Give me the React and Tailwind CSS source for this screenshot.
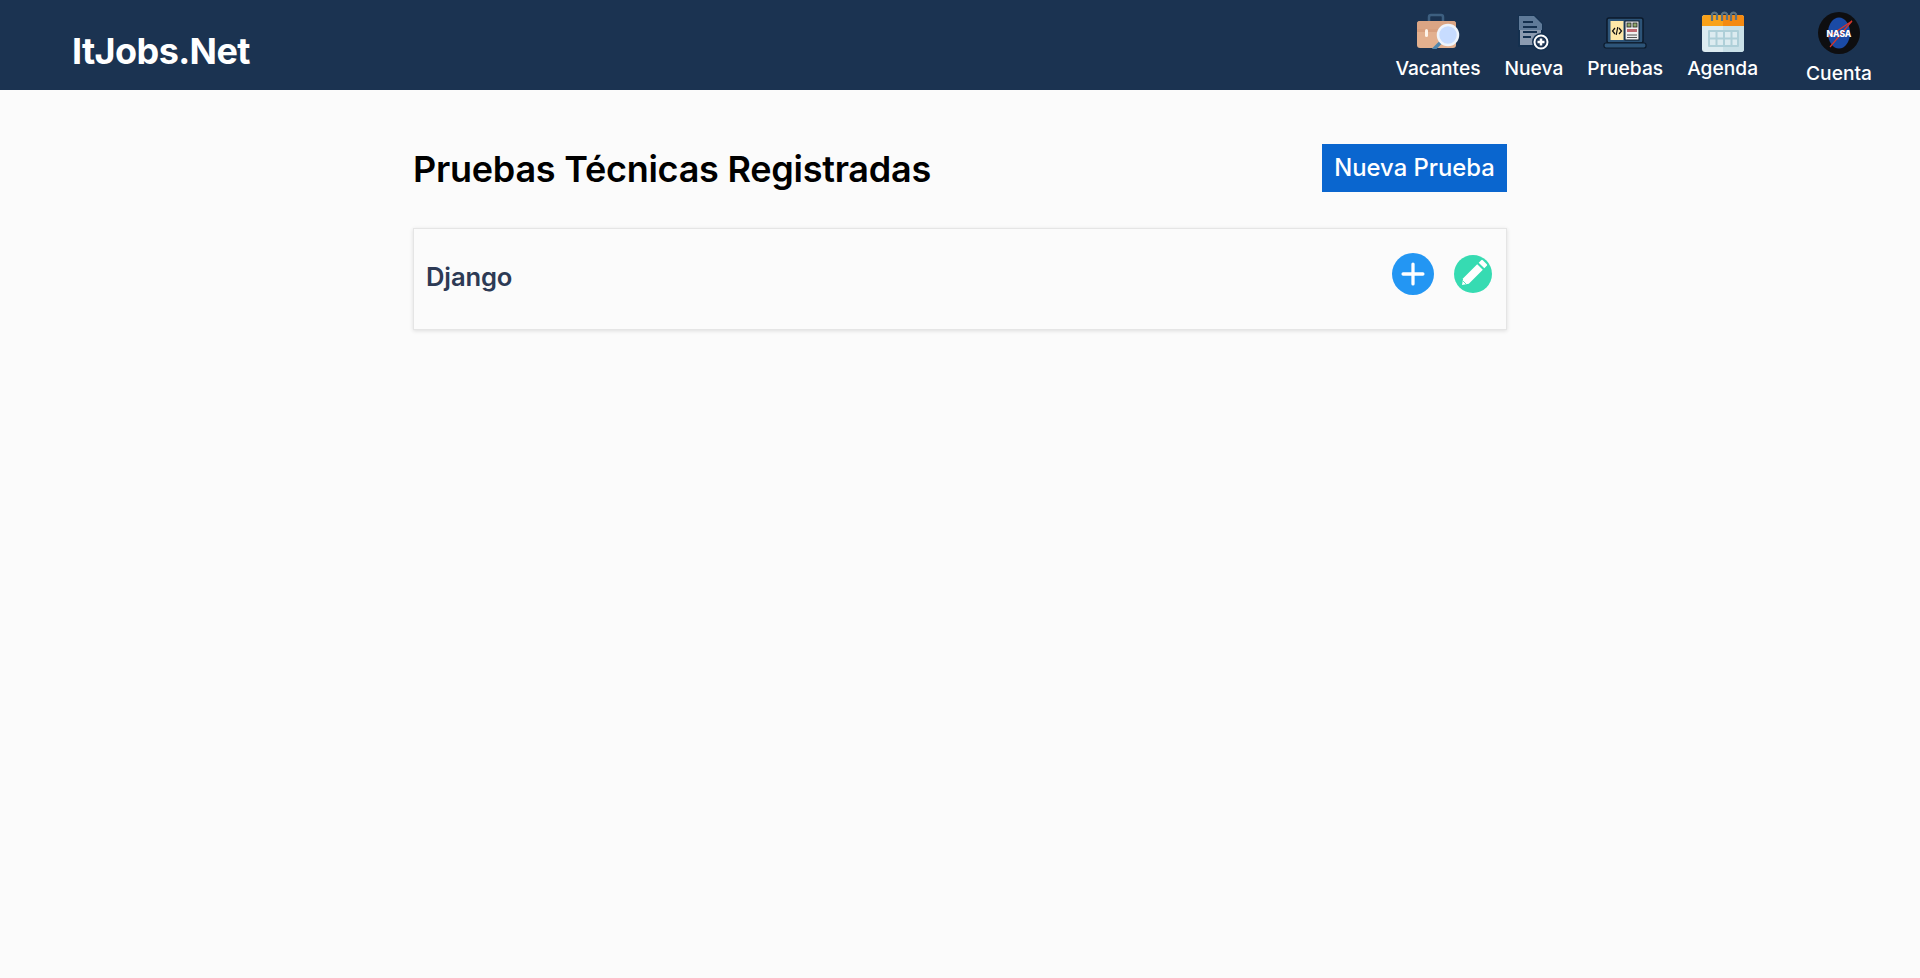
import { Plus } from "lucide-react"

function BriefcaseIcon() {
  return (
    <svg width="44" height="36" viewBox="0 0 44 36" className="block">
      <path d="M13 9V4a2 2 0 0 1 2-2h10a2 2 0 0 1 2 2v5" fill="none" stroke="#3d5f80" strokeWidth="2.5" />
      <rect x="1" y="8" width="39" height="27" rx="3" fill="#e3b08e" />
      <rect x="1" y="8" width="39" height="11" rx="3" fill="#dba584" />
      <rect x="1" y="16" width="39" height="3" fill="#d89f7d" />
      <rect x="9" y="16" width="3" height="8" rx="1.5" fill="#fdf3e8" />
      <path d="M25 29l-7 7" stroke="#4f86ad" strokeWidth="3.5" strokeLinecap="round" />
      <circle cx="32" cy="22" r="10" fill="#c7dcff" stroke="#eef4fb" strokeWidth="2.5" />
    </svg>
  )
}

function NewDocIcon() {
  return (
    <svg width="34" height="36" viewBox="0 0 34 36" className="block mt-1">
      <path d="M2 1h15l8 8v22H2z" fill="#8c9bb0" stroke="#14304f" strokeWidth="2" />
      <path d="M2 1h15l8 8v6H2z" fill="#5f7a98" />
      <path d="M6 7h10M6 12h14M6 17h14M6 22h8" stroke="#14304f" strokeWidth="2" />
      <circle cx="24" cy="27" r="9" fill="#14304f" />
      <circle cx="24" cy="27" r="6.5" fill="#1b3351" stroke="#ffffff" strokeWidth="2" />
      <path d="M20.5 27h7M24 23.5v7" stroke="#ffffff" strokeWidth="2.5" />
    </svg>
  )
}

function LaptopIcon() {
  return (
    <svg width="44" height="32" viewBox="0 0 44 32" className="block mt-1">
      <rect x="4" y="1" width="36" height="25" rx="2" fill="#2d5478" stroke="#0c1a2b" strokeWidth="1.5" />
      <rect x="7.5" y="4" width="13" height="19" fill="#ffe9a8" />
      <rect x="22" y="4" width="14" height="19" fill="#f0f0f0" stroke="#0c1a2b" />
      <rect x="24" y="6" width="4" height="4" fill="#8fa86a" stroke="#222" strokeWidth=".8" />
      <rect x="30" y="6" width="4" height="4" fill="#8fa86a" stroke="#222" strokeWidth=".8" />
      <rect x="24" y="12" width="10" height="3" fill="#c06a72" />
      <path d="M24 18h10M24 20.5h10" stroke="#555" />
      <path d="M12 11l-2.5 3 2.5 3M16 11l2.5 3-2.5 3M14.8 10l-1.6 8" fill="none" stroke="#111" strokeWidth="1.2" />
      <rect x="1" y="26" width="42" height="5" rx="2" fill="#2d5478" stroke="#0c1a2b" strokeWidth="1.2" />
    </svg>
  )
}

function CalendarIcon() {
  return (
    <svg width="44" height="42" viewBox="0 0 44 42" className="block">
      <path d="M1 8a3 3 0 0 1 3-3h36a3 3 0 0 1 3 3v31a3 3 0 0 1-3 3H4a3 3 0 0 1-3-3z" fill="#dcebf0" />
      <path d="M22 15h21v24a3 3 0 0 1-3 3H22z" fill="#c9e0e7" />
      <path d="M1 8a3 3 0 0 1 3-3h36a3 3 0 0 1 3 3v8H1z" fill="#f9a21a" />
      <path d="M22 5h18a3 3 0 0 1 3 3v8H22z" fill="#f48a12" />
      <path d="M11 11V4a3 3 0 0 1 5 0v6M21 11V4a3 3 0 0 1 5 0v6M30 11V4a3 3 0 0 1 5 0v6" fill="none" stroke="#5d7380" strokeWidth="2.2" />
      <rect x="7" y="20" width="31" height="17" rx="1" fill="#aecfd8" />
      <g fill="#dcebf0">
        <rect x="9" y="22" width="5.5" height="5.5" />
        <rect x="16.5" y="22" width="5.5" height="5.5" />
        <rect x="24" y="22" width="5.5" height="5.5" />
        <rect x="31.5" y="22" width="4.5" height="5.5" />
        <rect x="9" y="29.5" width="5.5" height="5.5" />
        <rect x="16.5" y="29.5" width="5.5" height="5.5" />
        <rect x="24" y="29.5" width="5.5" height="5.5" />
        <rect x="31.5" y="29.5" width="4.5" height="5.5" />
      </g>
    </svg>
  )
}

function NasaAvatar() {
  return (
    <svg width="42" height="42" viewBox="0 0 42 42" className="block">
      <circle cx="21" cy="21" r="21" fill="#0e0e10" />
      <ellipse cx="21" cy="21" rx="11" ry="15.5" fill="#1a4aa5" />
      <path d="M10 25L34 9L12 35" fill="none" stroke="#d8352a" strokeWidth="1.2" />
      <text x="21" y="24.5" textAnchor="middle" fontSize="8.5" fontWeight="800" fill="#ffffff" fontFamily="Inter, sans-serif">NASA</text>
    </svg>
  )
}

function PencilIcon() {
  return (
    <svg width="38" height="38" viewBox="0 0 38 38" className="block">
      <path d="M8 30L9.2 23.2L23.2 9.2L28.800 14.800L14.800 28.800Z" fill="#ffffff" />
      <path d="M24.7 7.700L27.200 5.200Q28 4.400 28.800 5.200L32.800 9.200Q33.600 10 32.800 10.800L30.300 13.300Z" fill="#ffffff" />
      <path d="M9 26L12 29" stroke="#36dbb2" strokeWidth=".8" />
    </svg>
  )
}

const links = [
  { label: "Vacantes", icon: <BriefcaseIcon /> },
  { label: "Nueva", icon: <NewDocIcon /> },
  { label: "Pruebas", icon: <LaptopIcon /> },
  { label: "Agenda", icon: <CalendarIcon /> },
]

export default function App() {
  return (
    <div className="min-h-[978px] bg-[#fbfbfb] font-['Inter',sans-serif]">
      <nav className="h-[90px] bg-[#1b3351] flex items-center justify-between pl-[72px] pr-[48px]">
        <a className="text-[36px] font-bold tracking-[-0.6px] text-white mt-3">ItJobs.Net</a>
        <div className="flex items-center">
          <div className="flex gap-6">
            {links.map((link) => (
              <a key={link.label} className="flex flex-col items-center text-white text-[19.2px] font-medium">
                <div className="h-[46px] flex items-center">{link.icon}</div>
                <span className="leading-[28px]">{link.label}</span>
              </a>
            ))}
          </div>
          <a className="ml-12 mt-[7px] flex flex-col items-center text-white text-[19.2px] font-medium">
            <NasaAvatar />
            <span className="mt-[7px] leading-[24px]">Cuenta</span>
          </a>
        </div>
      </nav>

      <main className="w-[1094px] mx-auto pt-[54px]">
        <div className="flex items-center justify-between">
          <h1 className="h-12 text-[36px] font-semibold tracking-[-0.25px] text-black leading-[50px]">Pruebas Técnicas Registradas</h1>
          <button className="h-12 w-[185px] bg-[#0a66cf] text-white text-[23.8px] font-medium whitespace-nowrap">Nueva Prueba</button>
        </div>

        <div className="mt-9 h-[102px] border border-[#e5e5e5] shadow-[0_1px_4px_rgba(0,0,0,0.12)] flex items-center justify-between pl-3 pr-[14px]">
          <span className="text-[25.6px] font-semibold tracking-[-0.15px] text-[#2d3a55] -mt-1">Django</span>
          <div className="flex items-center gap-5 -mt-[10px]">
            <button className="w-[42px] h-[42px] rounded-full bg-[#2396f3] flex items-center justify-center text-white">
              <Plus size={34} strokeWidth={2.3} />
            </button>
            <button className="w-[38px] h-[38px] rounded-full bg-[#36dbb2] flex items-center justify-center">
              <PencilIcon />
            </button>
          </div>
        </div>
      </main>
    </div>
  )
}
